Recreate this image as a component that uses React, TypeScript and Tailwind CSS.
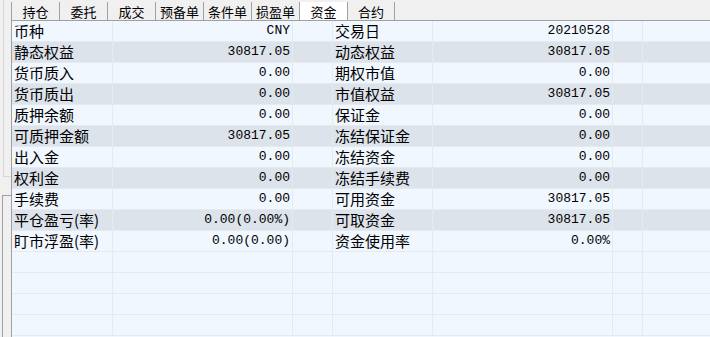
const tabs = ['持仓', '委托', '成交', '预备单', '条件单', '损盈单', '资金', '合约']

const rows: string[][] = [
  ['币种', 'CNY', '交易日', '20210528'],
  ['静态权益', '30817.05', '动态权益', '30817.05'],
  ['货币质入', '0.00', '期权市值', '0.00'],
  ['货币质出', '0.00', '市值权益', '30817.05'],
  ['质押余额', '0.00', '保证金', '0.00'],
  ['可质押金额', '30817.05', '冻结保证金', '0.00'],
  ['出入金', '0.00', '冻结资金', '0.00'],
  ['权利金', '0.00', '冻结手续费', '0.00'],
  ['手续费', '0.00', '可用资金', '30817.05'],
  ['平仓盈亏(率)', '0.00(0.00%)', '可取资金', '30817.05'],
  ['盯市浮盈(率)', '0.00(0.00)', '资金使用率', '0.00%'],
  ['', '', '', ''],
  ['', '', '', ''],
  ['', '', '', ''],
  ['', '', '', ''],
]

const cjk = "font-['SimSun','Noto_Sans_CJK_SC',sans-serif]"
const mono = "font-['Liberation_Mono','Noto_Sans_CJK_SC',monospace]"

export default function App() {
  return (
    <div className="flex h-[337px] w-[710px] overflow-hidden bg-[#f0f0f0] text-black">
      {/* 左侧残留面板 */}
      <div className="flex w-[11px] shrink-0 flex-col">
        <div className="ml-[3px] h-[177px] border-b border-l border-[#d6d6d6]" />
        <div className="ml-[2px] mt-[18px] flex-1 border-l border-t border-[#a0a0a0]" />
      </div>

      <div className="flex min-w-0 flex-1 flex-col">
        {/* 标签页 */}
        <div className="flex h-[21px] items-end border-b border-[#a0a0a0]">
          {tabs.map((t, i) => (
            <div
              key={t}
              className={
                'flex h-[18px] w-[48px] items-center justify-center border-l border-[#a0a0a0] text-[13px] leading-none ' +
                cjk +
                (t === '资金' ? ' bg-white' : '') +
                (i === tabs.length - 1 ? ' border-r' : '')
              }
            >
              {t}
            </div>
          ))}
        </div>

        {/* 资金表格 */}
        <div className="flex-1 border-l border-[#a0a0a0] bg-[#f0f7ff]">
          {rows.map((r, i) => {
            const striped = i % 2 === 1 && i < 11
            return (
              <div
                key={i}
                className={
                  'grid h-[21px] grid-cols-[101px_180px_40px_100px_180px_30px_1fr] border-b border-[#e6e9ed] ' +
                  (striped ? 'bg-[#dde3ea]' : 'bg-[#f0f7ff]')
                }
              >
                <div className={'border-r border-[#e6e9ed] pl-[2px] text-[15px] leading-[20px] ' + cjk}>{r[0]}</div>
                <div className={'border-r border-[#e6e9ed] pr-[2px] text-right text-[13px] leading-[20px] ' + mono}>{r[1]}</div>
                <div className="border-r border-[#e6e9ed]" />
                <div className={'border-r border-[#e6e9ed] pl-[2px] text-[15px] leading-[20px] ' + cjk}>{r[2]}</div>
                <div className={'border-r border-[#e6e9ed] pr-[2px] text-right text-[13px] leading-[20px] ' + mono}>{r[3]}</div>
                <div className="border-r border-[#e6e9ed]" />
                <div />
              </div>
            )
          })}
        </div>
      </div>
    </div>
  )
}
